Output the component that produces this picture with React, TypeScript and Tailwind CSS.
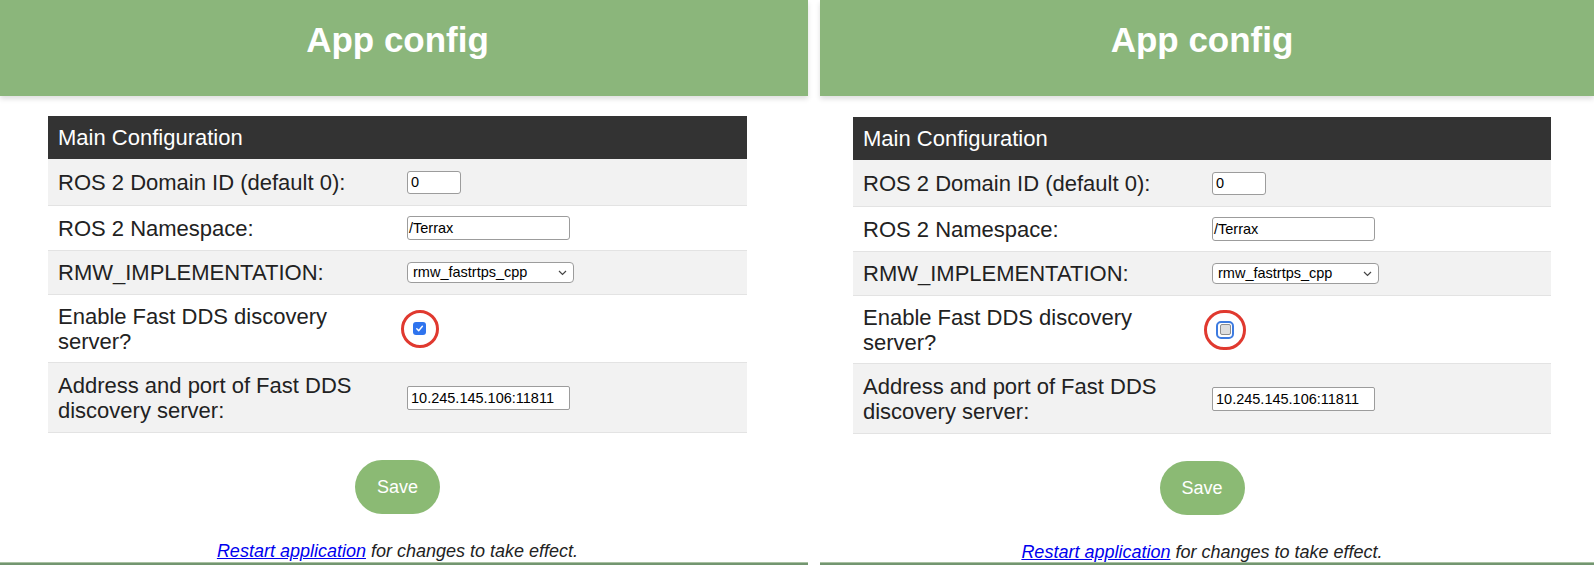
import React from "react";

type PanelProps = {
  panelCls: string;
  headerCls: string;
  titleCls: string;
  contentCls: string;
  checked: boolean;
};

function CheckedBox() {
  return (
    <span className="relative inline-flex ml-[6px]">
      <span className="w-[13px] h-[13px] rounded-[3px] bg-[#2f74ee] flex items-center justify-center">
        <svg width="9" height="9" viewBox="0 0 10 10">
          <path d="M2 5.3 L4.1 7.4 L8.2 2.6" fill="none" stroke="white" strokeWidth="1.6" strokeLinecap="round" strokeLinejoin="round" />
        </svg>
      </span>
      <span className="absolute left-1/2 top-1/2 -translate-x-1/2 -translate-y-1/2 w-[38px] h-[38px] rounded-full border-[3px] border-[#e0392f]" />
    </span>
  );
}

function UncheckedBox() {
  return (
    <span className="relative inline-flex ml-[4px]">
      <span className="w-[18px] h-[18px] rounded-[5px] border-2 border-[#3d7be0] flex items-center justify-center bg-white">
        <span className="w-[11px] h-[11px] rounded-[2px] border border-[#8e8e8e] bg-[#dedede]" />
      </span>
      <span className="absolute left-1/2 top-1/2 -translate-x-1/2 -translate-y-1/2 w-[42px] h-[40px] rounded-full border-[3px] border-[#e0392f]" />
    </span>
  );
}

function Row({
  label,
  rowCls,
  children,
}: {
  label: React.ReactNode;
  rowCls: string;
  children: React.ReactNode;
}) {
  return (
    <div className={`flex items-center border-b border-[#e3e3e3] ${rowCls}`}>
      <div className="w-[359px] shrink-0 pl-[10px] pr-[20px] text-[22px] leading-[25px] text-[#222]">
        {label}
      </div>
      <div className="flex items-center">{children}</div>
    </div>
  );
}

function Panel({ panelCls, headerCls, titleCls, contentCls, checked }: PanelProps) {
  return (
    <div className={`flex flex-col shrink-0 h-[566px] ${panelCls}`}>
      <header className={`bg-[#8bb67b] shadow-[0_3px_5px_rgba(0,0,0,0.13)] pt-[20px] ${headerCls}`}>
        <div className={`flex justify-center ${titleCls}`}>
          <h1 className="text-[35px] leading-[40px] font-bold text-white">App config</h1>
        </div>
      </header>
      <div className={`flex flex-col ${contentCls}`}>
        <div className="h-[43px] bg-[#333333] flex items-center pl-[10px] text-[22px] text-white">
          Main Configuration
        </div>
        <Row label="ROS 2 Domain ID (default 0):" rowCls="h-[47px] bg-[#f2f2f2]">
          <div className="w-[54px] h-[23px] border border-[#9c9c9c] rounded-[3px] bg-white text-[14.5px] leading-[21px] pl-[3px] text-black">
            0
          </div>
        </Row>
        <Row label="ROS 2 Namespace:" rowCls="h-[45px] bg-white">
          <div className="w-[163px] h-[24px] border border-[#9c9c9c] rounded-[3px] bg-white text-[14.5px] leading-[22px] pl-[1px] text-black">
            /Terrax
          </div>
        </Row>
        <Row label="RMW_IMPLEMENTATION:" rowCls="h-[44px] bg-[#f2f2f2]">
          <div className="w-[167px] h-[21px] border border-[#9c9c9c] rounded-[4px] bg-white text-[14.5px] leading-[19px] pl-[5px] pr-[6px] text-black flex items-center justify-between">
            <span>rmw_fastrtps_cpp</span>
            <svg width="9" height="6" viewBox="0 0 9 6">
              <path d="M1 1 L4.5 4.5 L8 1" fill="none" stroke="#444" strokeWidth="1.2" />
            </svg>
          </div>
        </Row>
        <Row
          label={<span>Enable Fast DDS discovery server?</span>}
          rowCls="h-[68px] bg-white"
        >
          {checked ? <CheckedBox /> : <UncheckedBox />}
        </Row>
        <Row
          label={<span>Address and port of Fast DDS discovery server:</span>}
          rowCls="h-[70px] bg-[#f2f2f2]"
        >
          <div className="w-[163px] h-[24px] border border-[#9c9c9c] rounded-[2px] bg-white text-[14.5px] leading-[22px] pl-[3px] text-black">
            10.245.145.106:11811
          </div>
        </Row>
        <div className="flex justify-center mt-[27px]">
          <button className="w-[85px] h-[54px] rounded-full bg-[#8bba74] text-white text-[18px]">
            Save
          </button>
        </div>
        <div className="flex justify-center mt-[27px] text-[18px] leading-[20px] italic text-[#222]">
          <span>
            <a href="#" className="text-[#0000ee] underline">
              Restart application
            </a>{" "}
            for changes to take effect.
          </span>
        </div>
      </div>
      <div className="mt-auto mb-[1px] h-[3px] bg-[#739670] border-t border-[#a9c1a3]" />
    </div>
  );
}

export default function App() {
  return (
    <div
      className="w-[1594px] h-[566px] bg-white flex overflow-hidden"
      style={{ fontFamily: '"Liberation Sans", Arial, sans-serif' }}
    >
      <Panel
        panelCls="w-[808px]"
        headerCls="h-[96px]"
        titleCls="ml-[48px] w-[699px]"
        contentCls="ml-[48px] w-[699px] mt-[20px]"
        checked={true}
      />
      <div className="w-[12px] shrink-0" />
      <Panel
        panelCls="w-[774px]"
        headerCls="h-[97px]"
        titleCls="ml-[33px] w-[698px]"
        contentCls="ml-[33px] w-[698px] mt-[21px]"
        checked={false}
      />
    </div>
  );
}
